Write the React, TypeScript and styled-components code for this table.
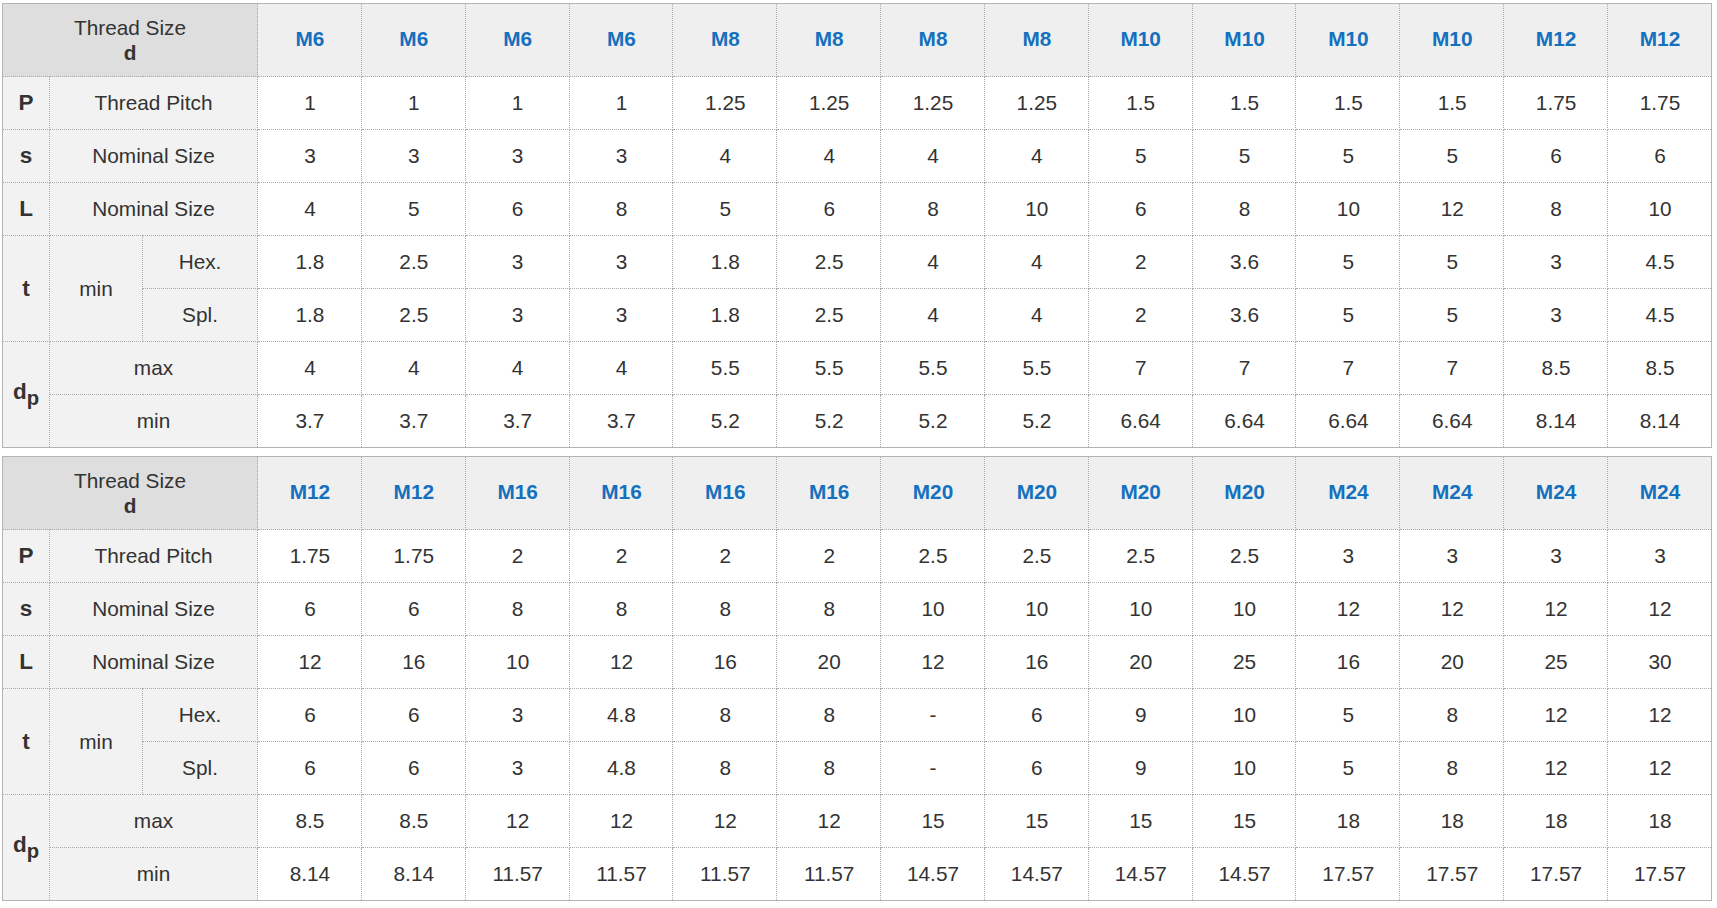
import React from 'react';
import styled, { createGlobalStyle } from 'styled-components';

const GlobalStyle = createGlobalStyle`
  body {
    margin: 0;
    background: #fff;
    font-family: "Liberation Sans", Arial, sans-serif;
  }
`;

const Page = styled.div`
  display: flex;
  flex-direction: column;
  gap: 8px;
  padding: 3px 0 0 2px;
`;

const Table = styled.table`
  width: 1710px;
  table-layout: fixed;
  border-collapse: collapse;
  border: 1px solid #b4b4b4;
  font-size: 20.8px;
  color: #333;
`;

const HeadRow = styled.tr`
  height: 73px;
`;

const Row = styled.tr`
  height: 53px;
`;

const Corner = styled.th`
  background: #dedede;
  font-weight: normal;
  line-height: 25px;
  border: 1px dotted #aaa;
  padding: 0;

  b {
    font-weight: bold;
  }
`;

const SizeHead = styled.th`
  background: #efefef;
  color: #1570be;
  font-weight: bold;
  border: 1px dotted #aaa;
  padding: 0 0 2px 1px;
`;

const Label = styled.td<{ $bold?: boolean }>`
  background: #f2f2f2;
  text-align: center;
  font-weight: ${p => (p.$bold ? 'bold' : 'normal')};
  font-size: ${p => (p.$bold ? '22.5px' : 'inherit')};
  border: 1px dotted #aaa;
  padding: 0;

  sub {
    font-size: 0.9em;
    vertical-align: -0.3em;
  }
`;

const Value = styled.td`
  background: #fff;
  text-align: center;
  border: 1px dotted #aaa;
  padding: 0 0 0 1px;
`;

interface Spec {
  sizes: string[];
  pitch: string[];
  s: string[];
  L: string[];
  hex: string[];
  spl: string[];
  max: string[];
  min: string[];
}

const rep = (v: string, n: number) => Array(n).fill(v);

const first: Spec = {
  sizes: [...rep('M6', 4), ...rep('M8', 4), ...rep('M10', 4), 'M12', 'M12'],
  pitch: [...rep('1', 4), ...rep('1.25', 4), ...rep('1.5', 4), '1.75', '1.75'],
  s: [...rep('3', 4), ...rep('4', 4), ...rep('5', 4), '6', '6'],
  L: ['4', '5', '6', '8', '5', '6', '8', '10', '6', '8', '10', '12', '8', '10'],
  hex: ['1.8', '2.5', '3', '3', '1.8', '2.5', '4', '4', '2', '3.6', '5', '5', '3', '4.5'],
  spl: ['1.8', '2.5', '3', '3', '1.8', '2.5', '4', '4', '2', '3.6', '5', '5', '3', '4.5'],
  max: [...rep('4', 4), ...rep('5.5', 4), ...rep('7', 4), '8.5', '8.5'],
  min: [...rep('3.7', 4), ...rep('5.2', 4), ...rep('6.64', 4), '8.14', '8.14'],
};

const second: Spec = {
  sizes: ['M12', 'M12', ...rep('M16', 4), ...rep('M20', 4), ...rep('M24', 4)],
  pitch: ['1.75', '1.75', ...rep('2', 4), ...rep('2.5', 4), ...rep('3', 4)],
  s: ['6', '6', ...rep('8', 4), ...rep('10', 4), ...rep('12', 4)],
  L: ['12', '16', '10', '12', '16', '20', '12', '16', '20', '25', '16', '20', '25', '30'],
  hex: ['6', '6', '3', '4.8', '8', '8', '-', '6', '9', '10', '5', '8', '12', '12'],
  spl: ['6', '6', '3', '4.8', '8', '8', '-', '6', '9', '10', '5', '8', '12', '12'],
  max: ['8.5', '8.5', ...rep('12', 4), ...rep('15', 4), ...rep('18', 4)],
  min: ['8.14', '8.14', ...rep('11.57', 4), ...rep('14.57', 4), ...rep('17.57', 4)],
};

const Cells = ({ values }: { values: string[] }) => (
  <>
    {values.map((v, i) => (
      <Value key={i}>{v}</Value>
    ))}
  </>
);

const SpecTable = ({ spec }: { spec: Spec }) => (
  <Table>
    <colgroup>
      <col style={{ width: 47 }} />
      <col style={{ width: 93 }} />
      <col style={{ width: 115 }} />
      {spec.sizes.map((_, i) => (
        <col key={i} />
      ))}
    </colgroup>
    <tbody>
      <HeadRow>
        <Corner colSpan={3}>
          Thread Size
          <br />
          <b>d</b>
        </Corner>
        {spec.sizes.map((s, i) => (
          <SizeHead key={i}>{s}</SizeHead>
        ))}
      </HeadRow>
      <Row>
        <Label $bold>P</Label>
        <Label colSpan={2}>Thread Pitch</Label>
        <Cells values={spec.pitch} />
      </Row>
      <Row>
        <Label $bold>s</Label>
        <Label colSpan={2}>Nominal Size</Label>
        <Cells values={spec.s} />
      </Row>
      <Row>
        <Label $bold>L</Label>
        <Label colSpan={2}>Nominal Size</Label>
        <Cells values={spec.L} />
      </Row>
      <Row>
        <Label $bold rowSpan={2}>t</Label>
        <Label rowSpan={2}>min</Label>
        <Label>Hex.</Label>
        <Cells values={spec.hex} />
      </Row>
      <Row>
        <Label>Spl.</Label>
        <Cells values={spec.spl} />
      </Row>
      <Row>
        <Label $bold rowSpan={2}>
          d<sub>p</sub>
        </Label>
        <Label colSpan={2}>max</Label>
        <Cells values={spec.max} />
      </Row>
      <Row>
        <Label colSpan={2}>min</Label>
        <Cells values={spec.min} />
      </Row>
    </tbody>
  </Table>
);

const App = () => (
  <>
    <GlobalStyle />
    <Page>
      <SpecTable spec={first} />
      <SpecTable spec={second} />
    </Page>
  </>
);

export default App;
